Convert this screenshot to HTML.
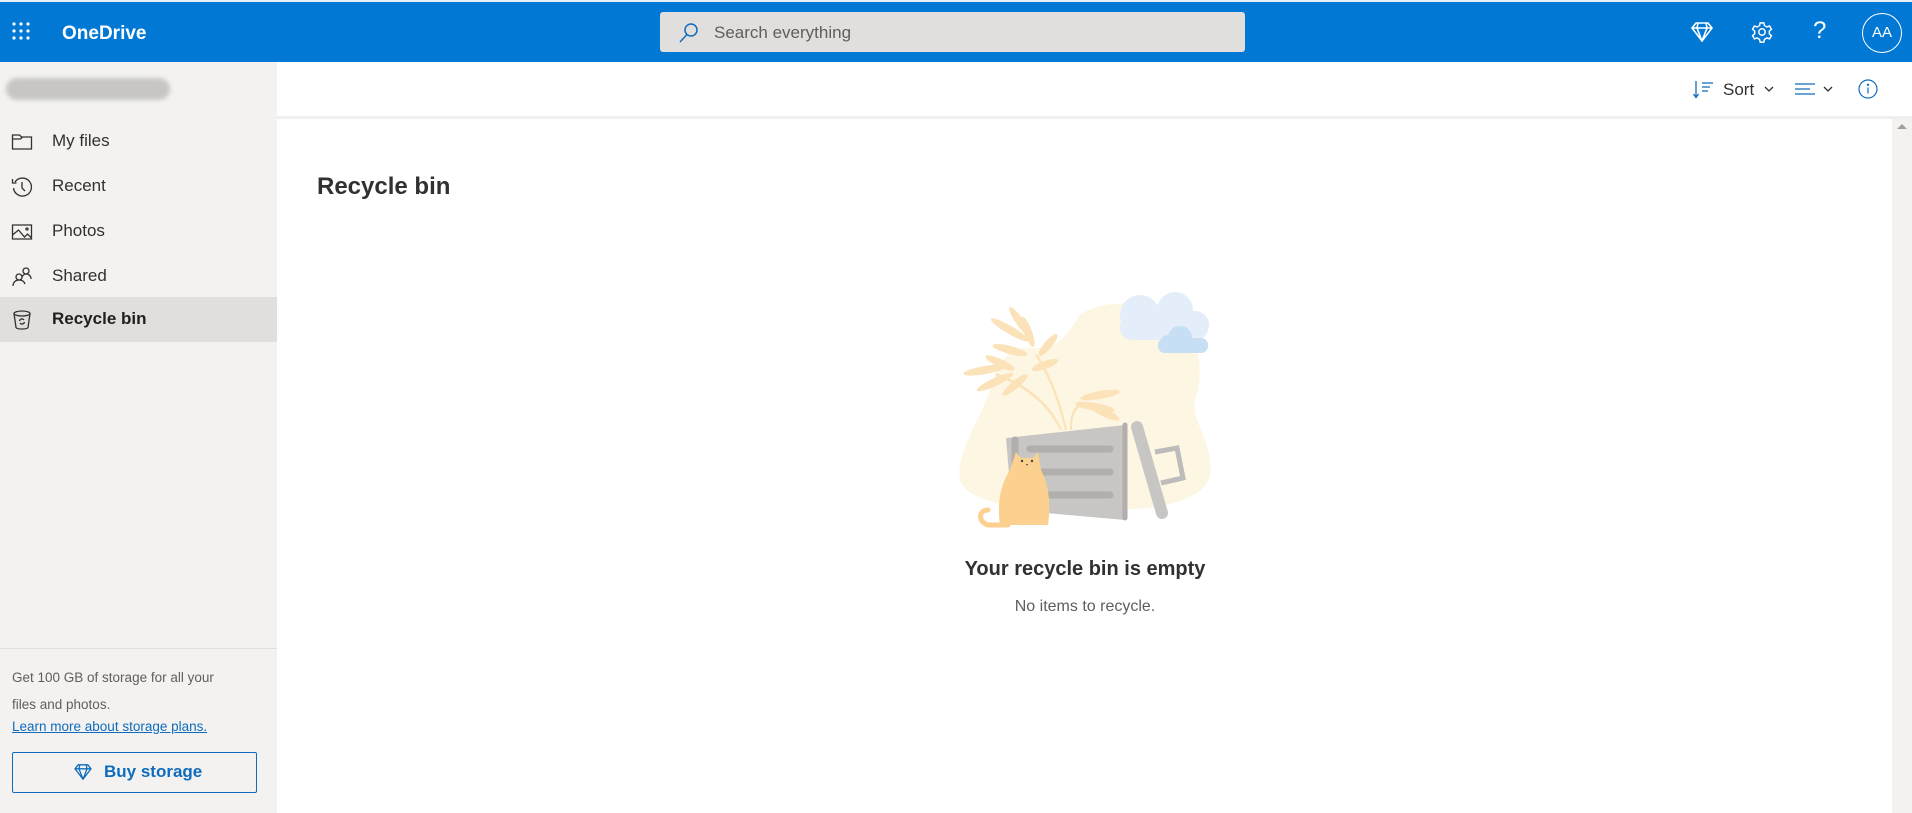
<!DOCTYPE html>
<html><head><meta charset="utf-8"><style>
*{box-sizing:border-box;margin:0;padding:0}
body{width:1912px;height:813px;overflow:hidden;font-family:"Segoe UI","Liberation Sans",sans-serif;background:#fff;position:relative;color:#323130}
.hdr{position:absolute;left:0;top:0;width:1912px;height:62px;background:#0078d4;border-top:2px solid #e8eef5}
.abs{position:absolute}
.side{position:absolute;left:0;top:62px;width:277px;height:751px;background:#f3f2f1}
.nav{position:absolute;left:0;width:277px;height:45px;font-size:17px;color:#323130}
.nav span{position:absolute;left:52px;top:12px}
.nav svg{position:absolute;left:11px;top:12px}
</style></head><body>
<div class="hdr">
 <svg class="abs" style="left:12px;top:20px" width="20" height="20" viewBox="0 0 20 20" fill="#fff">
  <circle cx="2" cy="2" r="1.6"/><circle cx="9" cy="2" r="1.6"/><circle cx="16" cy="2" r="1.6"/>
  <circle cx="2" cy="9" r="1.6"/><circle cx="9" cy="9" r="1.6"/><circle cx="16" cy="9" r="1.6"/>
  <circle cx="2" cy="16" r="1.6"/><circle cx="9" cy="16" r="1.6"/><circle cx="16" cy="16" r="1.6"/>
 </svg>
 <div class="abs" style="left:62px;top:21px;color:#fff;font-size:19px;font-weight:bold">OneDrive</div>
 <div class="abs" style="left:660px;top:10px;width:585px;height:40px;background:#e1dfdd;border-radius:3px">
  <svg class="abs" style="left:18px;top:10px" width="22" height="22" viewBox="0 0 22 22" fill="none" stroke="#0f6cbd" stroke-width="1.5"><circle cx="13" cy="8" r="6"/><path d="M9 12.5L2 20"/></svg>
  <div class="abs" style="left:54px;top:11px;font-size:17px;color:#605e5c">Search everything</div>
 </div>
 <svg class="abs" style="left:1691px;top:20px" width="22" height="20" viewBox="0 0 22 20" fill="none" stroke="#fff" stroke-width="1.6"><path d="M5 1h12l4 5-10 13L1 6z M1 6h20 M7 1l-1 5 5 13 5-13-1-5"/></svg>
 <svg class="abs" style="left:1751px;top:19px" width="22" height="22" viewBox="0 0 24 24" fill="none" stroke="#fff" stroke-width="1.6"><circle cx="12" cy="12" r="3.5"/><path d="M10 2h4l.7 3 2.6 1.5 3-1 2 3.5-2.3 2v3l2.3 2-2 3.5-3-1-2.6 1.5-.7 3h-4l-.7-3-2.6-1.5-3 1-2-3.5 2.3-2v-3l-2.3-2 2-3.5 3 1L9.3 5z"/></svg>
 <div class="abs" style="left:1813px;top:15px;color:#fff;font-size:24px">?</div>
 <div class="abs" style="left:1862px;top:11px;width:40px;height:40px;border:1.5px solid #fff;border-radius:50%;color:#fff;font-size:15px;text-align:center;line-height:37px">AA</div>
</div>
<div class="side">
 <div class="abs" style="left:6px;top:16px;width:164px;height:22px;background:#c8c6c4;border-radius:11px;filter:blur(2px)"></div>
 <div class="nav" style="top:57px"><svg width="22" height="22" viewBox="0 0 22 22" fill="none" stroke="#323130" stroke-width="1.3"><path d="M1.5 4h7l2 2h10v12h-19z M1.5 8h8l2-2"/></svg><span>My files</span></div>
 <div class="nav" style="top:102px"><svg width="22" height="22" viewBox="0 0 22 22" fill="none" stroke="#323130" stroke-width="1.3"><path d="M4 6a9 9 0 1 1-1.5 6 M1.5 3v4h4 M11 6v6l3 3"/></svg><span>Recent</span></div>
 <div class="nav" style="top:147px"><svg width="22" height="22" viewBox="0 0 22 22" fill="none" stroke="#323130" stroke-width="1.3"><path d="M1.5 4h19v14h-19z M1.5 14l6-5 6 7 3-3 4 4"/><circle cx="16" cy="8" r="1"/></svg><span>Photos</span></div>
 <div class="nav" style="top:192px"><svg width="22" height="22" viewBox="0 0 22 22" fill="none" stroke="#323130" stroke-width="1.3"><circle cx="8" cy="11" r="3"/><circle cx="15" cy="5" r="3"/><path d="M2 20c0-4 3-6 6-6s5 1 6 4 M11 11c1-2 2-3 4-3 3 0 5 2 5 5"/></svg><span>Shared</span></div>
 <div class="nav" style="top:235px;background:#e1dfdd;font-weight:600;color:#201f1e"><svg width="22" height="22" viewBox="0 0 22 22" fill="none" stroke="#323130" stroke-width="1.3"><ellipse cx="11" cy="4.5" rx="8" ry="2.5"/><path d="M3 4.5l2 14c1 2 11 2 12 0l2-14 M8.5 12a2.5 2.5 0 0 1 4.5-1 M13.5 13a2.5 2.5 0 0 1-4.5 1"/></svg><span>Recycle bin</span></div>
 <div class="abs" style="left:0;top:586px;width:277px;border-top:1px solid #e1dfdd"></div>
 <div class="abs" style="left:12px;top:602px;font-size:13.5px;line-height:27px;color:#605e5c;width:260px">Get 100 GB of storage for all your<br>files and photos.</div>
 <div class="abs" style="left:12px;top:657px;font-size:13.5px;color:#0f6cbd;text-decoration:underline">Learn more about storage plans.</div>
 <div class="abs" style="left:12px;top:690px;width:245px;height:41px;border:1px solid #0f6cbd;border-radius:2px;color:#0f6cbd;font-size:17px;font-weight:600">
  <svg class="abs" style="left:61px;top:11px" width="18" height="16" viewBox="0 0 22 20" fill="none" stroke="#0f6cbd" stroke-width="1.6"><path d="M5 1h12l4 5-10 13L1 6z M1 6h20 M7 1l-1 5 5 13 5-13-1-5"/></svg>
  <div class="abs" style="left:91px;top:9px">Buy storage</div>
 </div>
</div>
<div class="abs" style="left:277px;top:116px;width:1635px;height:3px;background:#f0efee"></div>
<svg class="abs" style="left:1693px;top:80px" width="22" height="20" viewBox="0 0 22 20" fill="none" stroke="#0f6cbd" stroke-width="1.3"><path d="M3 1v16 M0.5 14l2.5 3.5 2.5-3.5 M9 3h11 M9 7h8 M9 11h6"/></svg>
<div class="abs" style="left:1723px;top:80px;font-size:17px;color:#323130">Sort</div>
<svg class="abs" style="left:1764px;top:86px" width="10" height="6" viewBox="0 0 10 6" fill="none" stroke="#323130" stroke-width="1.3"><path d="M1 1l4 4 4-4"/></svg>
<svg class="abs" style="left:1795px;top:83px" width="22" height="14" viewBox="0 0 22 14" fill="none" stroke="#0f6cbd" stroke-width="1.3"><path d="M0 1h20 M0 6h15 M0 11h20"/></svg>
<svg class="abs" style="left:1823px;top:86px" width="10" height="6" viewBox="0 0 10 6" fill="none" stroke="#323130" stroke-width="1.3"><path d="M1 1l4 4 4-4"/></svg>
<svg class="abs" style="left:1858px;top:79px" width="20" height="20" viewBox="0 0 20 20" fill="none" stroke="#0f6cbd" stroke-width="1.2"><circle cx="10" cy="10" r="9"/><path d="M10 8.5v6"/><circle cx="10" cy="5.8" r=".6" fill="#0f6cbd"/></svg>
<div class="abs" style="left:1892px;top:119px;width:20px;height:694px;background:#f3f2f1"></div>
<svg class="abs" style="left:1897px;top:122px" width="10" height="8" viewBox="0 0 10 8"><path d="M0 7l5-5 5 5z" fill="#a19f9d"/></svg>
<div class="abs" style="left:317px;top:173px;font-size:24px;font-weight:600;color:#323130">Recycle bin</div>
<svg class="abs" style="left:940px;top:270px" width="300" height="270" viewBox="0 0 300 270">
 <path d="M20 210C15 185 40 150 50 120 58 90 70 75 95 78 120 80 130 60 140 45 160 30 200 30 230 45 260 65 265 100 255 130 250 150 275 175 270 205 265 230 220 240 170 240 110 240 30 240 20 210Z" fill="#fdf6e2"/>
 <g fill="#fbe2b8">
  <path d="M125 160C118 130 108 105 95 85 L97 84C110 104 120 128 127 160Z"/>
  <ellipse cx="70" cy="60" rx="22" ry="4" transform="rotate(30 70 60)"/>
  <ellipse cx="80" cy="52" rx="18" ry="4" transform="rotate(55 80 52)"/>
  <ellipse cx="88" cy="62" rx="16" ry="4" transform="rotate(70 88 62)"/>
  <ellipse cx="70" cy="80" rx="18" ry="4" transform="rotate(15 70 80)"/>
  <ellipse cx="108" cy="75" rx="14" ry="4" transform="rotate(-50 108 75)"/>
  <ellipse cx="105" cy="95" rx="14" ry="4" transform="rotate(-20 105 95)"/>
  <path d="M120 160C105 130 80 115 55 105 L56 103C82 113 108 128 122 160Z"/>
  <ellipse cx="45" cy="100" rx="22" ry="4" transform="rotate(-10 45 100)"/>
  <ellipse cx="55" cy="112" rx="20" ry="4" transform="rotate(-25 55 112)"/>
  <ellipse cx="75" cy="115" rx="16" ry="4" transform="rotate(-40 75 115)"/>
  <ellipse cx="60" cy="93" rx="16" ry="4" transform="rotate(25 60 93)"/>
  <path d="M130 160C130 140 135 135 145 132 L146 134C137 137 132 142 132 160Z"/>
  <ellipse cx="160" cy="125" rx="20" ry="4" transform="rotate(-10 160 125)"/>
  <ellipse cx="155" cy="137" rx="20" ry="4" transform="rotate(10 155 137)"/>
  <ellipse cx="165" cy="143" rx="16" ry="4" transform="rotate(25 165 143)"/>
 </g>
 <g fill="#e3eefa"><circle cx="200" cy="45" r="20"/><circle cx="235" cy="40" r="18"/><circle cx="255" cy="55" r="14"/><rect x="180" y="45" width="88" height="25" rx="12"/></g>
 <g fill="#c7dff5"><circle cx="240" cy="68" r="12"/><circle cx="228" cy="73" r="8"/><rect x="218" y="68" width="50" height="15" rx="7"/></g>
 <path d="M66 168L185 155 185 250 72 240Z" fill="#c8c6c4"/>
 <g stroke="#b1aeab" stroke-width="7" stroke-linecap="round"><path d="M90 179H170 M90 202H170 M90 225H170"/><path d="M75 170V200"/><path d="M185 155V248" stroke-width="5"/></g>
 <path d="M215 182l22-4 6 30-22 5" fill="none" stroke="#bebcba" stroke-width="5"/>
 <path d="M197 157L222 243" stroke="#c8c6c4" stroke-width="12" stroke-linecap="round"/>
 <path d="M48 240c-10 0-10 12 0 15h20" fill="none" stroke="#fcd08e" stroke-width="5" stroke-linecap="round"/>
 <path d="M76 182l5 6h12l5-6 3 18c8 15 10 35 7 55H60c-3-20 0-40 10-55Z" fill="#fcd08e"/>
 <circle cx="82" cy="191" r="1.2" fill="#444"/><circle cx="92" cy="191" r="1.2" fill="#444"/><path d="M86 194h2l-1 2z" fill="#444"/>
</svg>
<div class="abs" style="left:0;width:2170px;top:558px;text-align:center;font-size:20px;font-weight:600;color:#323130">Your recycle bin is empty</div>
<div class="abs" style="left:0;width:2170px;top:598px;text-align:center;font-size:16px;color:#605e5c">No items to recycle.</div>
</body></html>
